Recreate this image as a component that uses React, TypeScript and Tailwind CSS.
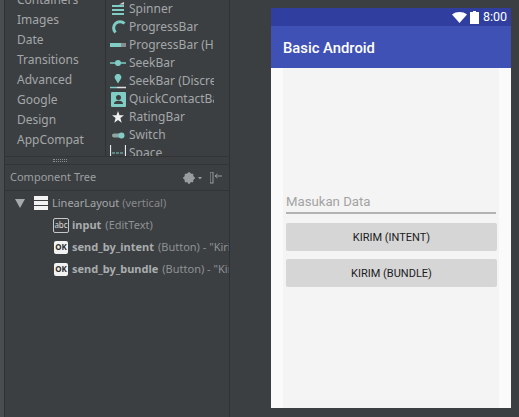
const categories = ["Containers", "Images", "Date", "Transitions", "Advanced", "Google", "Design", "AppCompat"]

const teal = "#7fcdc5"

function SpinnerIcon() {
  return (
    <svg width="16" height="14" viewBox="0 0 16 14">
      <path d="M2 4h12M2 8h12M2 12h12" stroke={teal} strokeWidth="2" />
      <path d="M9 2.500l5-2.500v2.500z" fill="#d8d8d8" />
    </svg>
  )
}

function ProgressIcon() {
  return (
    <svg width="16" height="16" viewBox="0 0 16 16">
      <path d="M14.500 4.500A6 6 0 1 0 5.500 13.500" fill="none" stroke={teal} strokeWidth="3" />
    </svg>
  )
}

function ProgressHorizontalIcon() {
  return (
    <svg width="16" height="5" viewBox="0 0 16 5">
      <rect width="11" height="4" fill={teal} />
      <rect x="11" width="5" height="4" fill="#8a8d8f" />
    </svg>
  )
}

function SeekIcon() {
  return (
    <svg width="16" height="8" viewBox="0 0 16 8">
      <path d="M0 4h16" stroke={teal} strokeWidth="1.500" />
      <circle cx="8" cy="4" r="3" fill={teal} />
    </svg>
  )
}

function SeekDiscreteIcon() {
  return (
    <svg width="16" height="15" viewBox="0 0 16 15">
      <path d="M8 9.500 5.200 5a3.300 3.300 0 1 1 5.600 0z" fill={teal} />
      <path d="M0 13.500h7" stroke={teal} strokeWidth="1.500" />
      <path d="M7 13.500h9" stroke="#e0e0e0" strokeWidth="1.500" />
    </svg>
  )
}

function ContactIcon() {
  return (
    <svg width="15" height="15" viewBox="0 0 15 15">
      <rect width="15" height="15" rx="1" fill={teal} />
      <circle cx="7.500" cy="5.500" r="2.500" fill="#3c3f41" />
      <path d="M3 12c0-2.500 2.500-3.200 4.500-3.200S12 9.500 12 12z" fill="#3c3f41" />
    </svg>
  )
}

function StarIcon() {
  return (
    <svg width="12" height="12" viewBox="0 0 12 12">
      <path d="M6 0l1.500 4.200H12L8.400 7l1.300 4.700L6 9l-3.700 2.700L3.600 7 0 4.200h4.500z" fill="#f0f0f0" />
    </svg>
  )
}

function SwitchIcon() {
  return (
    <svg width="13" height="7" viewBox="0 0 13 7">
      <rect y="1.500" width="10" height="4" rx="2" fill="#8fa5a3" />
      <circle cx="9.500" cy="3.500" r="3" fill={teal} />
    </svg>
  )
}

function SpaceIcon() {
  return (
    <svg width="16" height="16" viewBox="0 0 16 16">
      <path d="M.5 0v16M15.500 0v16" stroke="#e8e8e8" strokeWidth="1.200" />
      <path d="M2 8h12" stroke={teal} strokeWidth="1.200" strokeDasharray="3 1" />
    </svg>
  )
}

const widgets = [
  { name: "Spinner", icon: <SpinnerIcon /> },
  { name: "ProgressBar", icon: <ProgressIcon /> },
  { name: "ProgressBar (Horizontal)", icon: <ProgressHorizontalIcon /> },
  { name: "SeekBar", icon: <SeekIcon /> },
  { name: "SeekBar (Discrete)", icon: <SeekDiscreteIcon /> },
  { name: "QuickContactBadge", icon: <ContactIcon /> },
  { name: "RatingBar", icon: <StarIcon /> },
  { name: "Switch", icon: <SwitchIcon /> },
  { name: "Space", icon: <SpaceIcon /> },
]

function OkBadge() {
  return (
    <span className="flex h-[13px] w-[14px] shrink-0 items-center justify-center rounded-[2px] bg-[#f2f2f2] text-[8px] font-bold text-[#2b2b2b]">
      OK
    </span>
  )
}

function Palette() {
  return (
    <div className="flex h-[156px] overflow-hidden">
      <div className="-mt-[10px] w-[100px] shrink-0 pl-[12px]">
        {categories.map((category) => (
          <div key={category} className="flex h-[20px] items-center">
            {category}
          </div>
        ))}
      </div>
      <div className="w-[113px] shrink-0 overflow-hidden border-l border-[#2f3133] pl-[4px]">
        <div>
          {widgets.map((widget) => (
            <div key={widget.name} className="flex h-[18px] items-center whitespace-nowrap">
              <span className="flex w-[19px] shrink-0 justify-center pr-[3px]">{widget.icon}</span>
              <span className="w-[85px] overflow-hidden">{widget.name}</span>
            </div>
          ))}
        </div>
      </div>
    </div>
  )
}

function ComponentTree() {
  return (
    <div className="text-[11px]">
      <div className="flex h-[26px] items-center justify-between border-b border-[#323436] pl-[5px] pr-[7px]">
        <span className="text-[#9b9fa1]">Component Tree</span>
        <div className="flex items-center gap-[8px]">
          <svg width="19" height="12" viewBox="0 0 19 12">
            <circle cx="6" cy="6" r="3.500" fill="none" stroke="#9a9d9f" strokeWidth="3" />
            <path d="M6 0v12M0 6h12M2 2l8 8M10 2l-8 8" stroke="#9a9d9f" strokeWidth="1.500" />
            <path d="M15 5h4l-2 2.500z" fill="#9a9d9f" />
          </svg>
          <svg width="12" height="12" viewBox="0 0 12 12">
            <rect x="0" y="0" width="3" height="11" fill="none" stroke="#9a9d9f" />
            <path d="M5 4h7M5 4l2.500-2M5 4l2.500 2" stroke="#9a9d9f" fill="none" />
          </svg>
        </div>
      </div>
      <div className="pt-[1px]">
        <div className="flex h-[22px] items-center">
          <svg className="ml-[10px] mr-[9px]" width="10" height="9" viewBox="0 0 10 9">
            <path d="M0 0h10L5 9z" fill="#a6aaac" />
          </svg>
          <svg className="mr-[4px]" width="14" height="14" viewBox="0 0 14 14">
            <path d="M0 0h14v4H0zM0 5h14v4H0zM0 10h14v4H0z" fill="#f2f2f2" />
          </svg>
          <span>
            LinearLayout <span className="text-[#85898b]">(vertical)</span>
          </span>
        </div>
        <div className="flex h-[22px] items-center pl-[48px]">
          <span className="mr-[3px] flex h-[15px] w-[16px] shrink-0 items-center justify-center rounded-[2px] border border-[#c8c8c8] text-[8px] leading-none text-[#d8d8d8]">
            abc
          </span>
          <span className="font-bold text-[#a9adaf]">input</span>
          <span className="ml-[4px] text-[#8e9294]">(EditText)</span>
        </div>
        <div className="flex h-[22px] items-center overflow-hidden whitespace-nowrap pl-[49px]">
          <OkBadge />
          <span className="ml-[4px] font-bold text-[#a9adaf]">send_by_intent</span>
          <span className="ml-[4px] text-[#8e9294]">(Button) - "Kirim (Intent)"</span>
        </div>
        <div className="flex h-[22px] items-center overflow-hidden whitespace-nowrap pl-[49px]">
          <OkBadge />
          <span className="ml-[4px] font-bold text-[#a9adaf]">send_by_bundle</span>
          <span className="ml-[4px] text-[#8e9294]">(Button) - "Kirim (Bundle)"</span>
        </div>
      </div>
    </div>
  )
}

function PhonePreview() {
  return (
    <div className="flex h-[400px] w-[240px] flex-col font-['Roboto',sans-serif]">
      <div className="flex h-[18px] items-center justify-end bg-[#303f9f] pr-[4px] text-[12.5px] text-white">
        <svg className="mr-[3px]" width="15" height="11" viewBox="0 0 15 11">
          <path d="M0 2.500C4 -0.800 11 -0.800 15 2.500L7.500 11z" fill="#fff" />
        </svg>
        <svg className="mr-[4px]" width="9" height="13" viewBox="0 0 9 13">
          <path d="M3 0h3v1h3v12H0V1h3z" fill="#fff" />
        </svg>
        8:00
      </div>
      <div className="flex h-[42px] items-center bg-[#3f51b5] pl-[12px] pt-[2px] text-[14.8px] font-medium text-white">
        Basic Android
      </div>
      <div className="flex-1 bg-[#fafafa] px-[12px]">
        <div className="h-full bg-[#f4f4f4] pt-[122px]">
          <div className="mx-[3px] h-[24px] border-b-2 border-[#b3b3b3] text-[13.2px] leading-[24px] text-[#a3a3a3]">
            Masukan Data
          </div>
          <button className="mx-[3px] mt-[9px] flex h-[28px] w-[211px] items-center justify-center rounded-[2px] bg-[#d6d6d6] pt-[2px] text-[11px] text-[#1c1c1c]">
            KIRIM (INTENT)
          </button>
          <button className="mx-[3px] mt-[8px] flex h-[28px] w-[211px] items-center justify-center rounded-[2px] bg-[#d6d6d6] pt-[2px] text-[11px] text-[#1c1c1c]">
            KIRIM (BUNDLE)
          </button>
        </div>
      </div>
    </div>
  )
}

export default function App() {
  return (
    <div className="flex h-[417px] w-[519px] overflow-hidden bg-[#3c3f41] font-['Noto_Sans',sans-serif] text-[12px] text-[#a3a7a9]">
      <div className="w-[5px] shrink-0 border-r border-[#2f3133] bg-[#4a4d4f]" />
      <div className="flex w-[225px] shrink-0 flex-col border-r border-[#2f3133]">
        <Palette />
        <div className="flex h-[9px] shrink-0 items-start justify-center border-y border-[#323436] pr-[115px] pt-[2px]">
          <div className="h-[3px] w-[14px] border-y border-dotted border-[#8a8d8f]" />
        </div>
        <ComponentTree />
      </div>
      <div className="flex-1 pl-[41px] pt-[8px]">
        <PhonePreview />
      </div>
    </div>
  )
}
